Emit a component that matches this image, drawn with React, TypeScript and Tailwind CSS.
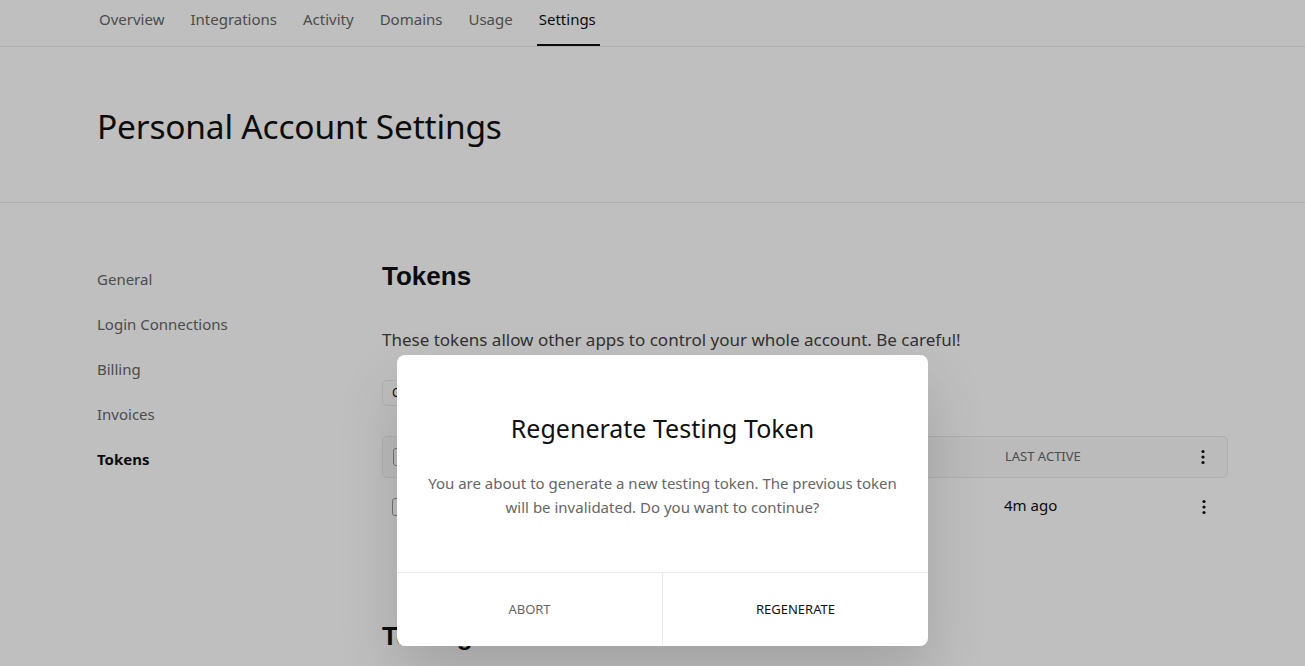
const tabs = ["Overview", "Integrations", "Activity", "Domains", "Usage", "Settings"];
const sideItems = ["General", "Login Connections", "Billing", "Invoices", "Tokens"];

function Kebab() {
  return (
    <svg width="4" height="16" viewBox="0 0 4 16" fill="#111" aria-hidden="true">
      <circle cx="2" cy="2.5" r="1.6" />
      <circle cx="2" cy="8" r="1.6" />
      <circle cx="2" cy="13.5" r="1.6" />
    </svg>
  );
}

export default function App() {
  return (
    <div className="relative h-[666px] overflow-hidden bg-white font-['Noto_Sans',sans-serif] text-[#111]">
      {/* top tabs */}
      <nav className="flex h-[47px] gap-[26px] border-b border-[#eaeaea] pl-[99px]">
        {tabs.map((t) => (
          <div
            key={t}
            className={
              t === "Settings"
                ? "relative flex h-full items-start pt-[8px] text-[15px] text-[#111]"
                : "flex h-full items-start pt-[8px] text-[15px] text-[#666]"
            }
          >
            {t}
            {t === "Settings" && (
              <span className="absolute bottom-[0px] left-[-2px] right-[-4px] h-[2px] bg-[#111]" />
            )}
          </div>
        ))}
      </nav>

      {/* page title */}
      <header className="flex h-[156px] items-center border-b border-[#eaeaea] pl-[97px] pt-[4px]">
        <h1 className="text-[33.5px] leading-none font-normal tracking-[-0.2px]">Personal Account Settings</h1>
      </header>

      <div className="flex pl-[97px]">
        <aside className="flex w-[285px] shrink-0 flex-col gap-[25.2px] pt-[65.5px] text-[15px] leading-5 text-[#666]">
          {sideItems.map((s) => (
            <div key={s} className={s === "Tokens" ? "font-bold text-[#111]" : ""}>
              {s}
            </div>
          ))}
        </aside>

        <main className="w-[846px] pt-[58px]">
          <h2 className="font-['Liberation_Sans',sans-serif] text-[26px] leading-[31px] font-bold">Tokens</h2>
          <p className="mt-[36px] text-[17px] leading-6 text-[#444]">
            These tokens allow other apps to control your whole account. Be careful!
          </p>
          <div className="mt-[28px] flex">
            <button className="h-[26px] rounded-[5px] border border-[#eaeaea] px-[9px] text-[12px] text-[#111]">
              Create
            </button>
          </div>

          {/* token table, mostly under the dialog */}
          <div className="mt-[30px] flex h-[42px] items-center rounded-[5px] border border-[#eaeaea] bg-[#fafafa] px-[10px] text-[13px] text-[#666] uppercase">
            <span className="h-[18px] w-[16px] rounded-[3px] border border-[#999]" />
            <span className="w-[596px]" />
            <span className="flex-1">Last Active</span>
            <span className="mr-[12px]">
              <Kebab />
            </span>
          </div>
          <div className="flex h-[58px] items-center px-[10px] text-[15px] text-[#111]">
            <span className="h-[18px] w-[16px] rounded-[3px] border border-[#999]" />
            <span className="w-[596px]" />
            <span className="flex-1 -translate-y-[2px]">4m ago</span>
            <span className="mr-[12px]">
              <Kebab />
            </span>
          </div>

          <h2 className="mt-[85px] font-['Liberation_Sans',sans-serif] text-[26px] leading-[31px] font-bold">
            Testing Token
          </h2>
        </main>
      </div>

      {/* modal overlay */}
      <div className="absolute inset-0 flex justify-center bg-black/25 pl-[20px] pt-[355px]">
        <div className="flex h-[291px] w-[531px] flex-col overflow-hidden rounded-[8px] bg-white shadow-[0_30px_60px_rgba(0,0,0,0.15)]">
          <div className="flex h-[217px] flex-col items-center px-[20px] pt-[56px] text-center">
            <h3 className="text-[25px] leading-[34px] font-normal text-[#111]">Regenerate Testing Token</h3>
            <p className="mt-[26px] text-[15px] leading-6 text-[#666]">
              You are about to generate a new testing token. The previous token
              <br />
              will be invalidated. Do you want to continue?
            </p>
          </div>
          <div className="flex flex-1 border-t border-[#eaeaea] text-[13px]">
            <button className="flex-1 border-r border-[#eaeaea] uppercase text-[#666]">ABORT</button>
            <button className="flex-1 uppercase text-[#111]">REGENERATE</button>
          </div>
        </div>
      </div>
    </div>
  );
}
